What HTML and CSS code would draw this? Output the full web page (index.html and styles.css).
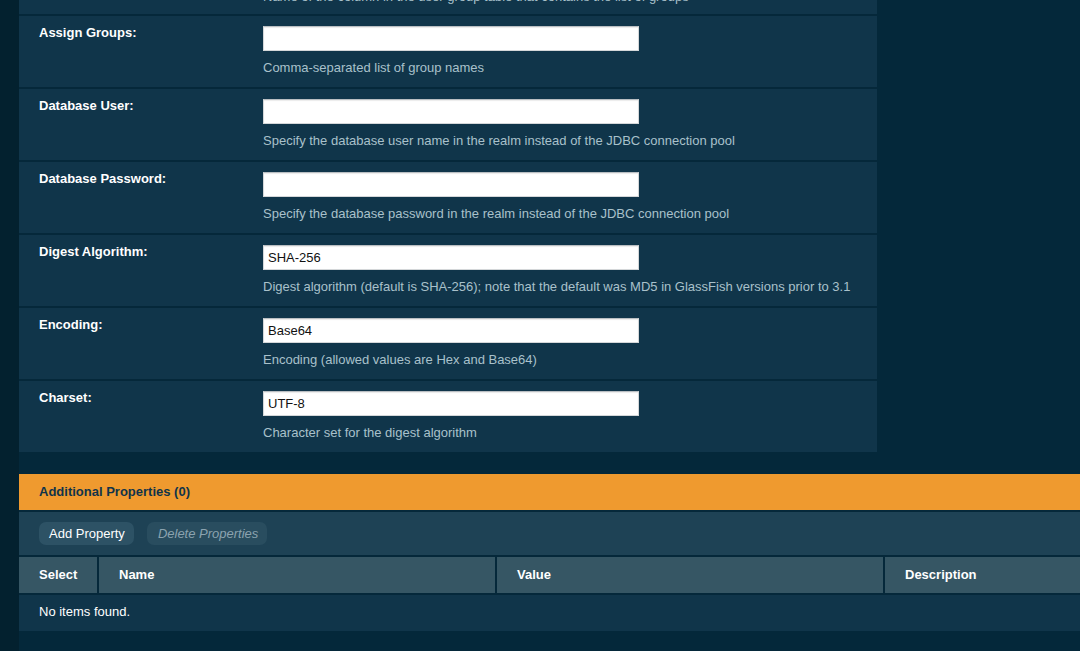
FILE: index.html
```html
<!DOCTYPE html>
<html>
<head>
<meta charset="utf-8">
<link rel="stylesheet" href="styles.css">
</head>
<body>
<div class="layout">
  <div class="sidebar"></div>
  <div class="main">
    <div class="form-panel">
      <div class="row row-partial">
        <div class="label"></div>
        <div class="field">
          <div class="desc desc-clipped">Name of the column in the user group table that contains the list of groups</div>
        </div>
      </div>
      <div class="row">
        <div class="label">Assign Groups:</div>
        <div class="field">
          <div class="input"></div>
          <div class="desc">Comma-separated list of group names</div>
        </div>
      </div>
      <div class="row">
        <div class="label">Database User:</div>
        <div class="field">
          <div class="input"></div>
          <div class="desc">Specify the database user name in the realm instead of the JDBC connection pool</div>
        </div>
      </div>
      <div class="row">
        <div class="label">Database Password:</div>
        <div class="field">
          <div class="input"></div>
          <div class="desc">Specify the database password in the realm instead of the JDBC connection pool</div>
        </div>
      </div>
      <div class="row">
        <div class="label">Digest Algorithm:</div>
        <div class="field">
          <div class="input">SHA-256</div>
          <div class="desc">Digest algorithm (default is SHA-256); note that the default was MD5 in GlassFish versions prior to 3.1</div>
        </div>
      </div>
      <div class="row">
        <div class="label">Encoding:</div>
        <div class="field">
          <div class="input">Base64</div>
          <div class="desc">Encoding (allowed values are Hex and Base64)</div>
        </div>
      </div>
      <div class="row row-last">
        <div class="label">Charset:</div>
        <div class="field">
          <div class="input">UTF-8</div>
          <div class="desc">Character set for the digest algorithm</div>
        </div>
      </div>
    </div>

    <div class="props">
      <div class="props-title">Additional Properties (0)</div>
      <div class="props-actions">
        <span class="btn">Add Property</span>
        <span class="btn btn-disabled">Delete Properties</span>
      </div>
      <div class="table">
        <div class="th">Select</div>
        <div class="th">Name</div>
        <div class="th">Value</div>
        <div class="th">Description</div>
        <div class="td-empty">No items found.</div>
      </div>
    </div>
  </div>
</div>
</body>
</html>
```
FILE: styles.css
```css
html, body {
  margin: 0;
  padding: 0;
  height: 100%;
  overflow: hidden;
}
body {
  background: #04283a;
  font-family: "Liberation Sans", Arial, Helvetica, sans-serif;
  font-size: 13px;
  line-height: 16px;
  color: #ffffff;
}
.layout {
  display: flex;
  height: 651px;
}
.sidebar {
  width: 19px;
  flex: none;
  background: #03212f;
}
.main {
  flex: 1;
  min-width: 0;
}
.form-panel {
  width: 858px;
  background: #10354a;
}
.row {
  display: flex;
  border-bottom: 2px solid #05283a;
  padding: 10px 0 11px;
}
.row-partial {
  height: 14px;
  padding: 0;
  overflow: hidden;
}
.row-last {
  border-bottom: none;
}
.label {
  width: 224px;
  flex: none;
  margin-top: -1px;
  padding-left: 20px;
  font-weight: bold;
  color: #ffffff;
}
.field {
  flex: 1;
}
.input {
  width: 376px;
  height: 25px;
  box-sizing: border-box;
  background: #ffffff;
  border: 1px solid #d4d7d9;
  border-top-color: #b9bec2;
  box-shadow: inset 0 1px 1px rgba(0,0,0,0.08);
  padding: 0 4px;
  line-height: 23px;
  color: #111111;
  font-size: 13px;
}
.desc {
  margin-top: 9px;
  color: #a9c1cb;
  font-size: 13px;
  white-space: nowrap;
}
.desc-clipped {
  margin-top: -11px;
}
.props {
  margin-top: 22px;
}
.props-title {
  background: #ef9a2f;
  height: 36px;
  line-height: 36px;
  padding-left: 20px;
  font-weight: bold;
  color: #10344a;
  border-bottom: 2px solid #05283a;
}
.props-actions {
  background: #1e4255;
  height: 45px;
  padding: 10px 0 0 20px;
  box-sizing: border-box;
  display: flex;
  gap: 13px;
  align-items: flex-start;
  border-bottom: 2px solid #05283a;
}
.btn {
  display: inline-block;
  height: 23px;
  line-height: 23px;
  padding: 0 9px 0 10px;
  border-radius: 7px;
  background: #2d5265;
  color: #ffffff;
  font-size: 13px;
}
.btn-disabled {
  background: #294d5f;
  color: #8ba3af;
  font-style: italic;
  padding: 0 9px 0 11px;
}
.table {
  display: grid;
  grid-template-columns: 78px 396px 386px 1fr;
  column-gap: 2px;
  background: #05283a;
  row-gap: 2px;
}
.th {
  background: #365664;
  height: 36px;
  line-height: 36px;
  padding-left: 20px;
  font-weight: bold;
  color: #ffffff;
}
.td-empty {
  grid-column: 1 / -1;
  background: #10354a;
  height: 36px;
  line-height: 34px;
  padding-left: 20px;
  color: #ffffff;
}
```
